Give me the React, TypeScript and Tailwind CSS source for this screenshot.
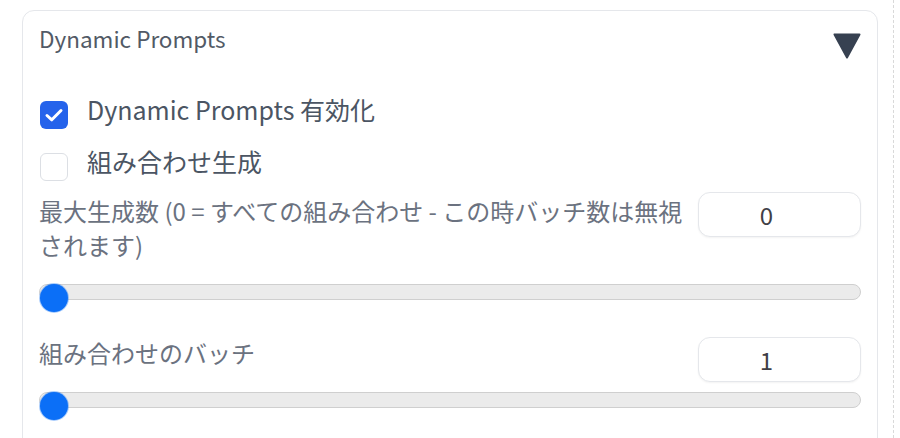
import React from "react";

function Checkbox({ checked }: { checked: boolean }) {
  if (checked) {
    return (
      <div className="mt-[7px] ml-[1px] flex h-[28px] w-[28px] shrink-0 items-center justify-center rounded-[6px] bg-[#2563eb]">
        <svg width="22" height="22" viewBox="0 0 22 22" fill="none">
          <path d="M4 11.5 L8.8 15.8 L18 6.5" stroke="white" strokeWidth="3" strokeLinecap="round" strokeLinejoin="round" />
        </svg>
      </div>
    );
  }
  return <div className="mt-[7px] ml-[1px] h-[28px] w-[28px] shrink-0 rounded-[6px] border border-[#dcdfe4] bg-white" />;
}

function Slider() {
  return (
    <div className="relative h-[28px] w-full">
      <div className="mt-[6px] h-[16px] w-full rounded-full border border-[#cfcfcf] bg-[#ebebeb]" />
      <div className="absolute left-[1px] top-0 h-[28px] w-[28px] rounded-full bg-[#0b6ff7] shadow-[0_0_0_1px_rgba(11,111,247,0.35)]" />
    </div>
  );
}

function NumberBox({ value }: { value: string }) {
  return (
    <div className="flex h-[45px] w-[163px] shrink-0 items-center justify-center rounded-[12px] border border-[#e5e7eb] bg-white pl-[12px] pr-[38px] text-[24px] text-[#3f3f46] shadow-[0_1px_2px_rgba(0,0,0,0.05)]">
      {value}
    </div>
  );
}

export default function App() {
  return (
    <div
      className="flex h-[438px] w-[900px] overflow-hidden bg-white"
      style={{ fontFamily: '"Noto Sans CJK JP", "Noto Sans", sans-serif' }}
    >
      <div className="ml-[22px] mt-[10px] h-[460px] w-[856px] shrink-0 rounded-t-[12px] border border-[#e5e7eb] px-[16px]">
        <div className="flex items-start justify-between pt-[12px]">
          <span className="text-[22.5px] leading-[30px] text-[#525a66]">Dynamic Prompts</span>
          <svg className="mt-[10px]" width="28" height="26" viewBox="0 0 28 26">
            <polygon points="1.5,1.5 26.5,1.5 14,24.5" fill="#374151" stroke="#374151" strokeWidth="2" strokeLinejoin="round" />
          </svg>
        </div>

        <div className="mt-[35px] flex items-start gap-[19px]">
          <Checkbox checked />
          <span className="text-[25px] leading-[30px] text-[#4b5563]">Dynamic Prompts 有効化</span>
        </div>
        <div className="mt-[17px] flex items-start gap-[19px]">
          <Checkbox checked={false} />
          <span className="text-[25px] leading-[30px] text-[#4b5563]">組み合わせ生成</span>
        </div>

        <div className="mt-[11px] flex items-start gap-[10px]">
          <span className="mt-[2px] min-w-0 flex-1 text-[24px] leading-[34px] text-[#6b7280]">
            最大生成数 (0 = すべての組み合わせ - この時バッチ数は無視
            <br />
            されます)
          </span>
          <NumberBox value="0" />
        </div>
        <div className="mt-[22px]">
          <Slider />
        </div>

        <div className="mt-[24px] flex items-start gap-[10px]">
          <span className="min-w-0 flex-1 text-[24px] leading-[34px] text-[#6b7280]">組み合わせのバッチ</span>
          <div className="mt-[1px]">
            <NumberBox value="1" />
          </div>
        </div>
        <div className="mt-[10px]">
          <Slider />
        </div>
      </div>
      <div className="ml-[15px] h-full border-l border-dashed border-[#d9d9d9]" />
    </div>
  );
}
